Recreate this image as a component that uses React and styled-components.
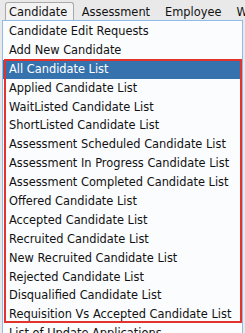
import React from "react";
import styled, { createGlobalStyle } from "styled-components";

const Global = createGlobalStyle`
  html, body {
    margin: 0;
    padding: 0;
    background: #e9e9e9;
    overflow: hidden;
  }
  body {
    font-family: "DejaVu Sans", "Liberation Sans", sans-serif;
    font-size: 11.4px;
  }
`;

const Bar = styled.div`
  display: flex;
  align-items: flex-end;
  height: 20px;
  padding-left: 5px;
  background: #e9e9e9;
  white-space: nowrap;
`;

const BarItem = styled.div`
  height: 18px;
  line-height: 18px;
  padding: ${(p) => (p.active ? "0 6px 0 3px" : "0 6.5px")};
  color: #111;
  box-sizing: border-box;
  border: ${(p) => (p.active ? "1px solid #a9a9a9" : "1px solid transparent")};
  border-bottom: none;
  border-radius: 3px 3px 0 0;
  background: ${(p) => (p.active ? "#f3f3f3" : "transparent")};
`;

const Panel = styled.div`
  position: relative;
  margin-left: 2px;
  width: 241px;
  box-sizing: border-box;
  border: 1px solid #8fbbe8;
  border-bottom: none;
  background: #fbfcfe;
  padding-top: 1px;
`;

const Item = styled.div`
  height: 18.9px;
  line-height: 18.9px;
  padding-left: 6px;
  white-space: nowrap;
  color: ${(p) => (p.selected ? "#fff" : "#111")};
  background: ${(p) => (p.selected ? "#3672ae" : "transparent")};
`;

const Marker = styled.div`
  position: absolute;
  left: 1px;
  top: 38px;
  width: 238px;
  height: 264px;
  box-sizing: border-box;
  border: 2px solid #e2342c;
  pointer-events: none;
`;

const menus = ["Candidate", "Assessment", "Employee", "Workflow"];

const items = [
  "Candidate Edit Requests",
  "Add New Candidate",
  "All Candidate List",
  "Applied Candidate List",
  "WaitListed Candidate List",
  "ShortListed Candidate List",
  "Assessment Scheduled Candidate List",
  "Assessment In Progress Candidate List",
  "Assessment Completed Candidate List",
  "Offered Candidate List",
  "Accepted Candidate List",
  "Recruited Candidate List",
  "New Recruited Candidate List",
  "Rejected Candidate List",
  "Disqualified Candidate List",
  "Requisition Vs Accepted Candidate List",
  "List of Update Applications",
];

export default function App() {
  return (
    <>
      <Global />
      <Bar>
        {menus.map((m, i) => (
          <BarItem key={m} active={i === 0}>
            {m}
          </BarItem>
        ))}
      </Bar>
      <Panel>
        {items.map((t, i) => (
          <Item key={t} selected={i === 2}>
            {t}
          </Item>
        ))}
        <Marker />
      </Panel>
    </>
  );
}
